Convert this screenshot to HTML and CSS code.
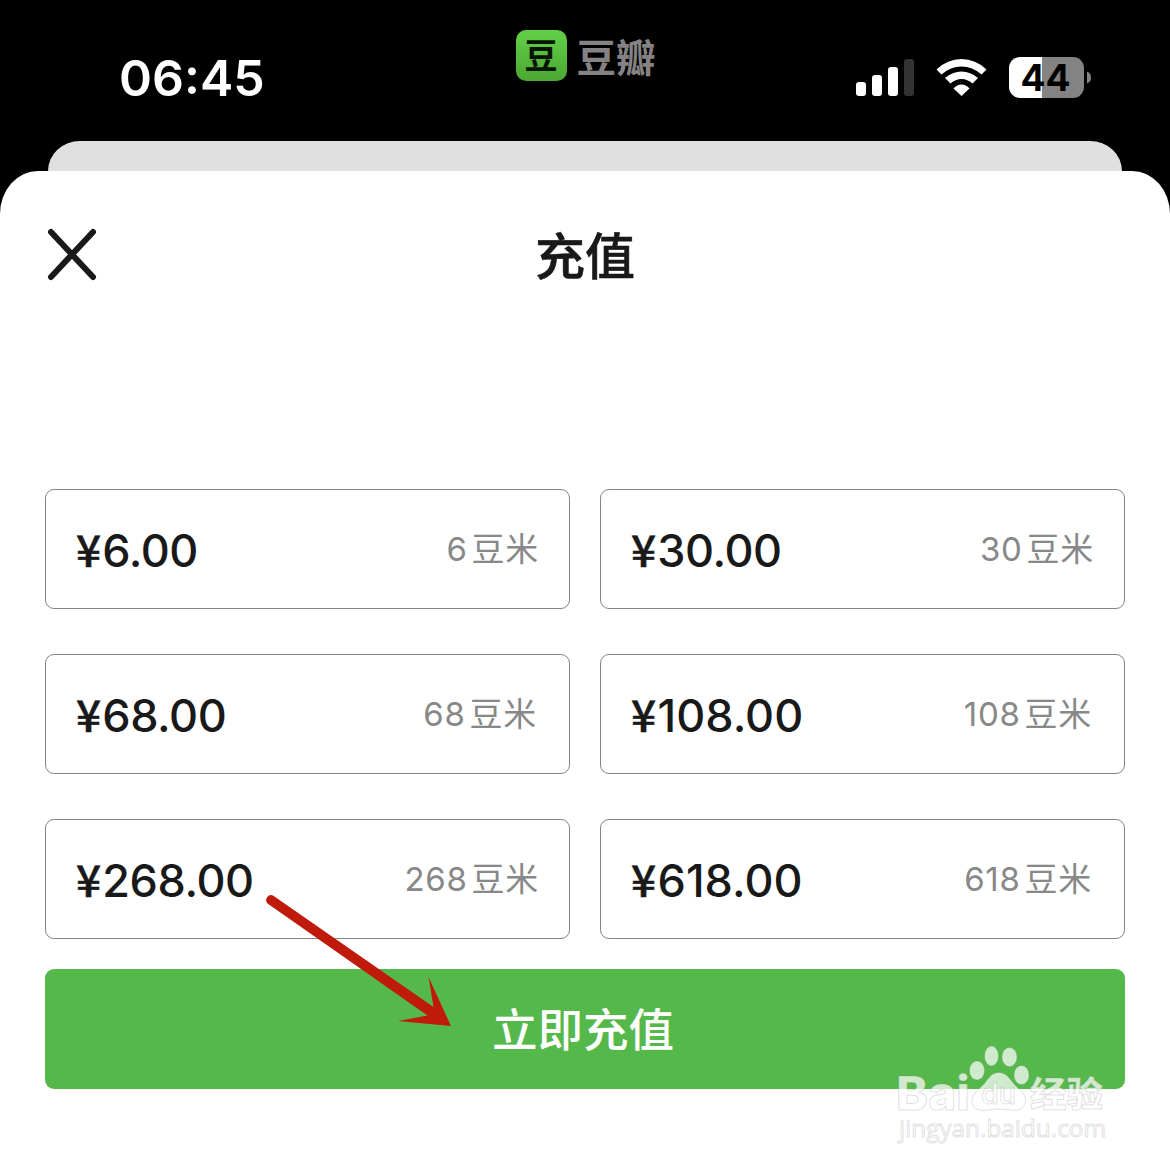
FILE: index.html
```html
<!DOCTYPE html>
<html lang="zh-CN">
<head>
<meta charset="utf-8">
<title>充值</title>
<link rel="stylesheet" href="styles.css">
</head>
<body>
<div class="screen">
  <header class="status">
    <time class="clock">06<span class="colon">:</span>45</time>
    <svg class="brand" width="144" height="64" viewBox="514 24 144 64">
      <defs><linearGradient id="leaf" x1="0" y1="0" x2="0" y2="1"><stop offset="0" stop-color="#62d047"/><stop offset="1" stop-color="#4ba834"/></linearGradient></defs>
      <rect x="516" y="30" width="51" height="51" rx="10" fill="url(#leaf)"/>
      <text class="brand-mark" x="524.5" y="68.500" textLength="33" lengthAdjust="spacingAndGlyphs">豆</text>
      <text class="brand-name" x="576.500" y="71.500" textLength="79" lengthAdjust="spacingAndGlyphs">豆瓣</text>
    </svg>
    <svg class="indicators" width="240" height="44" viewBox="854 55 240 44">
      <g fill="#fff">
        <rect x="856" y="82" width="10" height="14" rx="3"/>
        <rect x="872" y="75" width="10" height="21" rx="3"/>
        <rect x="888" y="67" width="10" height="29" rx="3"/>
        <rect x="904" y="59" width="10" height="37" rx="3" fill="#333"/>
        <path d="M936.5 69.5Q947.5 59 961.500 59T986.500 69.500L981.500 74.500Q972.500 66.500 961.500 66.500T941.500 74.500Z"/>
        <path d="M945 78Q952.500 71.500 961.500 71.500T978 78L972.500 83.500Q967.500 79 961.500 79T950.500 83.500Z"/>
        <path d="M953.500 88.500Q957 84.500 961.500 84.500T969.500 88.500L961.500 96Z"/>
      </g>
      <clipPath id="cell"><rect x="1009" y="57" width="75" height="41" rx="11"/></clipPath>
      <g clip-path="url(#cell)"><rect x="1009" y="57" width="33" height="41" fill="#fff"/><rect x="1042" y="57" width="42" height="41" fill="#838383"/></g>
      <path d="M1087 71.500Q1091 73 1091 77.500T1087 83.500Z" fill="#838383"/>
      <text class="charge" x="1020.500" y="91" textLength="50" lengthAdjust="spacingAndGlyphs">44</text>
    </svg>
  </header>
  <div class="sheet-behind"></div>
  <main class="sheet">
    <div class="heading">
      <svg class="close" width="50" height="54" viewBox="0 0 50 54"><path d="M4 4 46 49M46 4 4 49"/></svg>
      <h1>充值</h1>
    </div>
    <div class="plans">
      <div class="plan"><span class="price"><i>¥</i>6.00</span><span class="beans">6<b>豆米</b></span></div>
      <div class="plan"><span class="price"><i>¥</i>30.00</span><span class="beans">30<b>豆米</b></span></div>
      <div class="plan inset"><span class="price"><i>¥</i>68.00</span><span class="beans">68<b>豆米</b></span></div>
      <div class="plan inset"><span class="price wide"><i>¥</i>108.00</span><span class="beans">108<b>豆米</b></span></div>
      <div class="plan"><span class="price"><i>¥</i>268.00</span><span class="beans">268<b>豆米</b></span></div>
      <div class="plan inset"><span class="price wide"><i>¥</i>618.00</span><span class="beans">618<b>豆米</b></span></div>
    </div>
    <button class="submit">立即充值</button>
  </main>
  <svg class="overlay" width="1170" height="1170" viewBox="0 0 1170 1170">
    <path d="M273 895.500 433.500 1007 428.500 977 451 1026 398 1021 427.500 1015.500 267.500 903.500A5 5 0 0 1 273 895.500Z" fill="#bf1a0b"/>
    <g class="mark">
      <text class="mark-bai" x="896" y="1110" textLength="74" lengthAdjust="spacingAndGlyphs">Bai</text>
      <ellipse cx="977" cy="1070.500" rx="7.500" ry="9.500"/>
      <ellipse cx="991.500" cy="1056" rx="7" ry="10"/>
      <ellipse cx="1009.500" cy="1057" rx="7.500" ry="9.500"/>
      <ellipse cx="1021.500" cy="1075" rx="7.500" ry="9.500"/>
      <path d="M998.500 1072.500C1008 1072.500 1010 1081 1018 1088C1026 1095 1028 1101 1023 1107C1018 1113 1008 1109 998.500 1109C989 1109 980 1113 974 1107C969 1101 973 1094 980 1088C988 1081 990 1072.500 998.500 1072.500Z"/>
      <text class="mark-du" x="981" y="1104" textLength="35" lengthAdjust="spacingAndGlyphs">du</text>
      <text class="mark-cn" x="1030" y="1107" textLength="73" lengthAdjust="spacingAndGlyphs">经验</text>
      <text class="mark-url" x="899" y="1137" textLength="207" lengthAdjust="spacingAndGlyphs">jingyan.baidu.com</text>
    </g>
  </svg>
</div>
</body>
</html>
```
FILE: styles.css
```css
* { box-sizing: border-box; }
body { margin: 0; background: #000; }
.screen {
  position: relative;
  width: 1170px;
  height: 1170px;
  overflow: hidden;
  background: #000;
  font-family: Inter, "Noto Sans CJK SC", sans-serif;
  color: #191919;
}
.status {
  display: grid;
  grid-template-columns: 514px 340px 1fr;
  align-items: start;
  height: 141px;
}
.clock {
  padding: 48px 0 0 119px;
  color: #fff;
  font-size: 50px;
  font-weight: 580;
  line-height: 60px;
}
.colon { line-height: 0; vertical-align: 2px; }
.brand { margin-top: 24px; }
.indicators { margin-top: 55px; }
.brand-mark, .brand-name { font-family: "Noto Sans CJK SC", sans-serif; font-weight: 700; }
.brand-mark { font-size: 35px; fill: #061503; }
.brand-name { font-size: 39px; fill: #858283; }
.charge { font-size: 37px; font-weight: 700; fill: #000; }
.sheet-behind {
  height: 30px;
  margin: 0 48px;
  border-radius: 32px 32px 0 0 / 30px 30px 0 0;
  background: #e0e0e0;
}
.sheet {
  height: 999px;
  padding: 50px 45px 0;
  border-radius: 38px 38px 0 0 / 43px 43px 0 0;
  background: #fff;
}
.heading {
  display: grid;
  grid-template-columns: 50px 1fr 50px;
  grid-template-rows: 68px;
  align-items: center;
}
.close { margin: 0 0 1px 2px; fill: none; stroke: #191919; stroke-width: 6; stroke-linecap: round; }
h1 {
  margin: 0 0 5px;
  text-align: center;
  font: 500 50px/66px "Noto Sans CJK SC", sans-serif;
  -webkit-text-stroke: .6px #191919;
}
.plans {
  display: grid;
  grid-template-columns: 525px 525px;
  grid-auto-rows: 120px;
  gap: 45px 30px;
  margin-top: 200px;
}
.plan {
  display: flex;
  align-items: center;
  justify-content: space-between;
  padding: 0 30px;
  border: 1px solid #858585;
  border-radius: 9px;
}
.plan.inset { padding-right: 32px; }
.price { font-size: 45px; font-weight: 500; line-height: 60px; letter-spacing: -.4px; }
.price.wide { letter-spacing: 0; }
.price i { margin-right: 1.5px; font-family: "Noto Sans CJK SC", sans-serif; font-style: normal; font-size: 44px; -webkit-text-stroke: .5px #191919; }
.beans { display: flex; align-items: baseline; font-size: 33px; line-height: 48px; color: #888; letter-spacing: .7px; }
.beans b { margin-left: 4px; font-size: 33px; font-weight: 400; }
.submit {
  display: block;
  width: 100%;
  height: 120px;
  margin-top: 30px;
  padding: 0 4px 4px 0;
  border: 0;
  border-radius: 9px;
  background: #55b84b;
  color: #fff;
  font: 500 45.5px/116px "Noto Sans CJK SC", sans-serif;
}
.overlay { position: absolute; inset: 0; pointer-events: none; }
.mark { fill: rgba(255,255,255,.72); stroke: rgba(130,130,130,.25); stroke-width: 1; }
.mark-bai { font: 800 47px Inter, sans-serif; }
.mark-du { font: 500 29px Inter, sans-serif; }
.mark-cn { font: 900 35px "Noto Sans CJK SC", sans-serif; }
.mark-url { font: 500 23px "Open Sans", sans-serif; }
```
